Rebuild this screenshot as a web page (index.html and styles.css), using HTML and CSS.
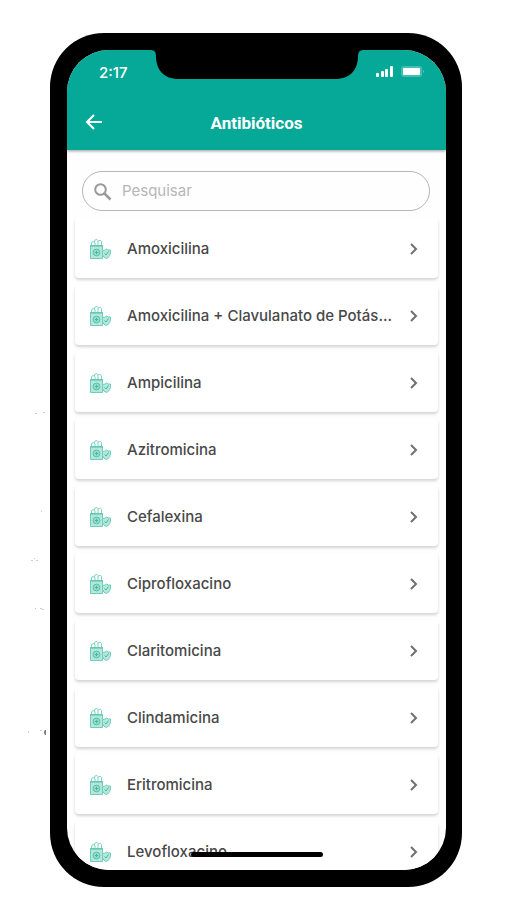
FILE: index.html
```
<!DOCTYPE html>
<html lang="pt-BR">
<head>
<meta charset="utf-8">
<meta name="viewport" content="width=device-width, initial-scale=1">
<title>Antibióticos</title>
<link rel="stylesheet" href="styles.css">
</head>
<body>
<svg class="defs" aria-hidden="true">
  <symbol id="medicine" viewBox="0 0 22 22">
    <path d="M1.500 7.500h12v13h-12z" fill="#b5e7dc" stroke="#6fcdb9"/>
    <path d="M2.500 7.500V5a1.800 1.800 0 0 1 3.500 0v2.500M5.500 4V3a1.900 1.900 0 0 1 3.500-.500v5M9 3.500a1.900 1.900 0 0 1 3.500 0v4" fill="none" stroke="#7ed2c0"/>
    <path d="M1 8h13" stroke="#55c2ac"/>
    <circle cx="7.500" cy="14.500" r="3.400" fill="#9bdccd" stroke="#55c2ac"/>
    <path d="M7.500 12.800v3.400M5.800 14.500h3.400" stroke="#43b9a1"/>
    <path d="M13.500 12.500q3 0 4-1.500 1.500 1.500 4 1 .500 6.500-4 8.500-3.500-1-4-4z" fill="#b5e7dc" stroke="#6fcdb9"/>
    <path d="M15.500 15.500l1.500 1.500 2.500-3.500" fill="none" stroke="#43b9a1"/>
  </symbol>
  <symbol id="chevron" viewBox="0 0 10 14">
    <path d="M2 2l5 5-5 5" fill="none" stroke="#707070" stroke-width="2"/>
  </symbol>
</svg>
<svg class="specks" width="24" height="330" viewBox="0 0 24 330" aria-hidden="true">
  <g fill="#ccc">
    <path d="M7 3h2v1h-2zM15 2h2v1h-2zM13 101h1v1h-1zM6 148h1v1h-1zM3 150h2v1h-2zM8 150h2v1h-2zM7 198h1v1h-1zM12 198h2v1h-2zM14 199h2v1h-2zM0 321h1v2h-1zM12 320h2v1h-2z"/>
    <path d="M18 320h-1q-2 2 0 5h1" fill="#777"/>
  </g>
</svg>
<main class="phone">
  <div class="screen">
    <header class="top">
      <div class="status">
        <span class="time">2:17</span>
        <svg class="signals" width="50" height="14" viewBox="0 0 50 14" aria-hidden="true">
          <g fill="#fff">
            <rect x="1" y="8" width="3" height="4" rx="1"/>
            <rect x="6" y="6" width="3" height="6" rx="1"/>
            <rect x="10" y="4" width="3" height="8" rx="1"/>
            <rect x="15" y="1" width="3" height="11" rx="1"/>
            <rect x="26" y="1" width="21" height="11" rx="3" opacity=".25"/>
            <rect x="28" y="3" width="17" height="7" rx="1"/>
            <path d="M48 5q2 1.500 0 3z" opacity=".4"/>
          </g>
        </svg>
      </div>
      <div class="bar">
        <button class="back" type="button" aria-label="Voltar">
          <svg width="18" height="18" viewBox="0 0 18 18"><path d="M17 9H2M9 2L2 9l7 7" fill="none" stroke="#fff" stroke-width="2"/></svg>
        </button>
        <h1>Antibióticos</h1>
      </div>
    </header>
    <label class="search">
      <svg width="18" height="18" viewBox="0 0 18 18" aria-hidden="true"><circle cx="6.500" cy="6.500" r="5.300" fill="none" stroke="#999" stroke-width="2"/><path d="M10.500 10.500l6 6" stroke="#999" stroke-width="2.500"/></svg>
      <input type="search" placeholder="Pesquisar" aria-label="Pesquisar">
    </label>
    <nav class="list">
      <a class="card" href="#"><svg class="pic"><use href="#medicine"/></svg><span>Amoxicilina</span><svg class="go"><use href="#chevron"/></svg></a>
      <a class="card" href="#"><svg class="pic"><use href="#medicine"/></svg><span>Amoxicilina + Clavulanato de Potás...</span><svg class="go"><use href="#chevron"/></svg></a>
      <a class="card" href="#"><svg class="pic"><use href="#medicine"/></svg><span>Ampicilina</span><svg class="go"><use href="#chevron"/></svg></a>
      <a class="card" href="#"><svg class="pic"><use href="#medicine"/></svg><span>Azitromicina</span><svg class="go"><use href="#chevron"/></svg></a>
      <a class="card" href="#"><svg class="pic"><use href="#medicine"/></svg><span>Cefalexina</span><svg class="go"><use href="#chevron"/></svg></a>
      <a class="card" href="#"><svg class="pic"><use href="#medicine"/></svg><span>Ciprofloxacino</span><svg class="go"><use href="#chevron"/></svg></a>
      <a class="card" href="#"><svg class="pic"><use href="#medicine"/></svg><span>Claritomicina</span><svg class="go"><use href="#chevron"/></svg></a>
      <a class="card" href="#"><svg class="pic"><use href="#medicine"/></svg><span>Clindamicina</span><svg class="go"><use href="#chevron"/></svg></a>
      <a class="card" href="#"><svg class="pic"><use href="#medicine"/></svg><span>Eritromicina</span><svg class="go"><use href="#chevron"/></svg></a>
      <a class="card" href="#"><svg class="pic"><use href="#medicine"/></svg><span>Levofloxacino</span><svg class="go"><use href="#chevron"/></svg></a>
    </nav>
    <svg class="notch" width="212" height="30" viewBox="0 0 212 30" aria-hidden="true"><path d="M0 0H212Q207 0 207 6C207 20 199 29 184 29H28C13 29 5 20 5 6Q5 0 0 0Z"/></svg>
    <div class="home"></div>
  </div>
</main>
</body>
</html>
```
FILE: styles.css
```
* {
  box-sizing: border-box;
}

body {
  position: relative;
  height: 100vh;
  margin: 0;
  padding: 33px 45px 13px 50px;
  background: #fff;
  color: #484848;
  font-family: Inter, "Liberation Sans", sans-serif;
}

.defs {
  position: absolute;
  width: 0;
  height: 0;
}

.specks {
  position: absolute;
  left: 28px;
  top: 410px;
}

.phone {
  height: 100%;
  padding: 17px 16px 17px 17px;
  border-radius: 54px;
  background: #000;
}

.screen {
  position: relative;
  height: 100%;
  overflow: hidden;
  border-radius: 42px;
  background: #fefefe;
}

.top {
  height: 100px;
  background: #06a998;
  box-shadow: 0 1px 3px rgba(0, 0, 0, 0.4);
  color: #fff;
}

.status {
  display: flex;
  align-items: center;
  justify-content: space-between;
  height: 44px;
  padding: 0 21px 0 32px;
}

.time {
  font-size: 15px;
  font-weight: 500;
}

.bar {
  display: grid;
  grid-template-columns: 56px 1fr 56px;
  align-items: center;
  height: 56px;
}

.back {
  display: flex;
  padding: 0 0 0 18px;
  border: 0;
  background: none;
}

h1 {
  margin: 2px 0 0;
  font-family: Roboto, "Liberation Sans", sans-serif;
  font-size: 17px;
  font-weight: 700;
  line-height: 24px;
  text-align: center;
}

.search {
  display: flex;
  align-items: center;
  gap: 10px;
  height: 40px;
  margin: 21px 16px 7px 15px;
  padding: 0 11px;
  border: 1px solid #b5b5b5;
  border-radius: 20px;
}

.search svg {
  flex: none;
  margin-top: 2px;
}

.search input {
  flex: 1;
  min-width: 0;
  padding: 0;
  border: 0;
  outline: 0;
  background: none;
  font: 15px/20px Inter, "Liberation Sans", sans-serif;
}

.search input::placeholder {
  color: #b6b6b6;
}

.list {
  display: grid;
  gap: 7px;
  padding: 0 8px;
}

.card {
  display: flex;
  align-items: center;
  height: 60px;
  padding: 2px 19px 0 14px;
  border-radius: 4px;
  background: #fff;
  box-shadow: 0 2px 3px rgba(0, 0, 0, 0.17);
  color: inherit;
  font-size: 15px;
  font-weight: 500;
  line-height: 20px;
  text-decoration: none;
}

.card span {
  flex: 1;
  min-width: 0;
  margin: 0 6px 0 16px;
  overflow: hidden;
  text-overflow: ellipsis;
  white-space: nowrap;
}

.pic {
  flex: none;
  width: 22px;
  height: 22px;
}

.go {
  flex: none;
  width: 10px;
  height: 14px;
}

.notch {
  position: absolute;
  top: 0;
  left: 50%;
  transform: translateX(-50%);
}

.home {
  position: absolute;
  bottom: 13px;
  left: 50%;
  width: 132px;
  height: 5px;
  border-radius: 3px;
  background: #000;
  transform: translateX(-50%);
}
```
